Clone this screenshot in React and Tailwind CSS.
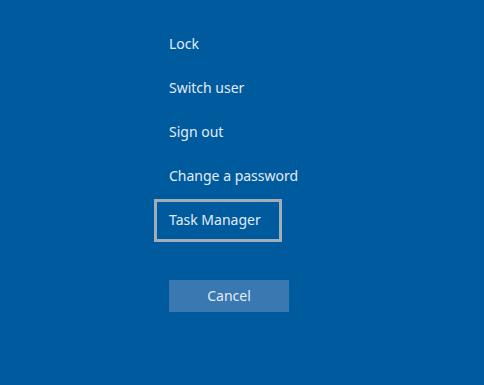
export default function App() {
  const items = ["Lock", "Switch user", "Sign out", "Change a password"];
  return (
    <div
      className="w-[484px] h-[385px] bg-[#005a9e] text-[#e3ecf6] overflow-hidden"
      style={{ fontFamily: '"Noto Sans", "Open Sans", sans-serif' }}
    >
      <div className="pt-[22px] pl-[154px] flex flex-col">
        {items.map((t) => (
          <div key={t} className="h-[44px] pl-[15px] flex items-center text-[14px] leading-none">
            {t}
          </div>
        ))}
        <div className="h-[44px] flex items-center">
          <div className="w-[128px] h-[43px] border-[3px] border-[#a3adba] pl-[12px] flex items-center text-[14px] leading-none">
            Task Manager
          </div>
        </div>
        <div className="pl-[15px] mt-[38px]">
          <div className="w-[120px] h-[32px] bg-[#3a78b1] flex items-center justify-center text-[14px] leading-none">
            Cancel
          </div>
        </div>
      </div>
    </div>
  );
}
